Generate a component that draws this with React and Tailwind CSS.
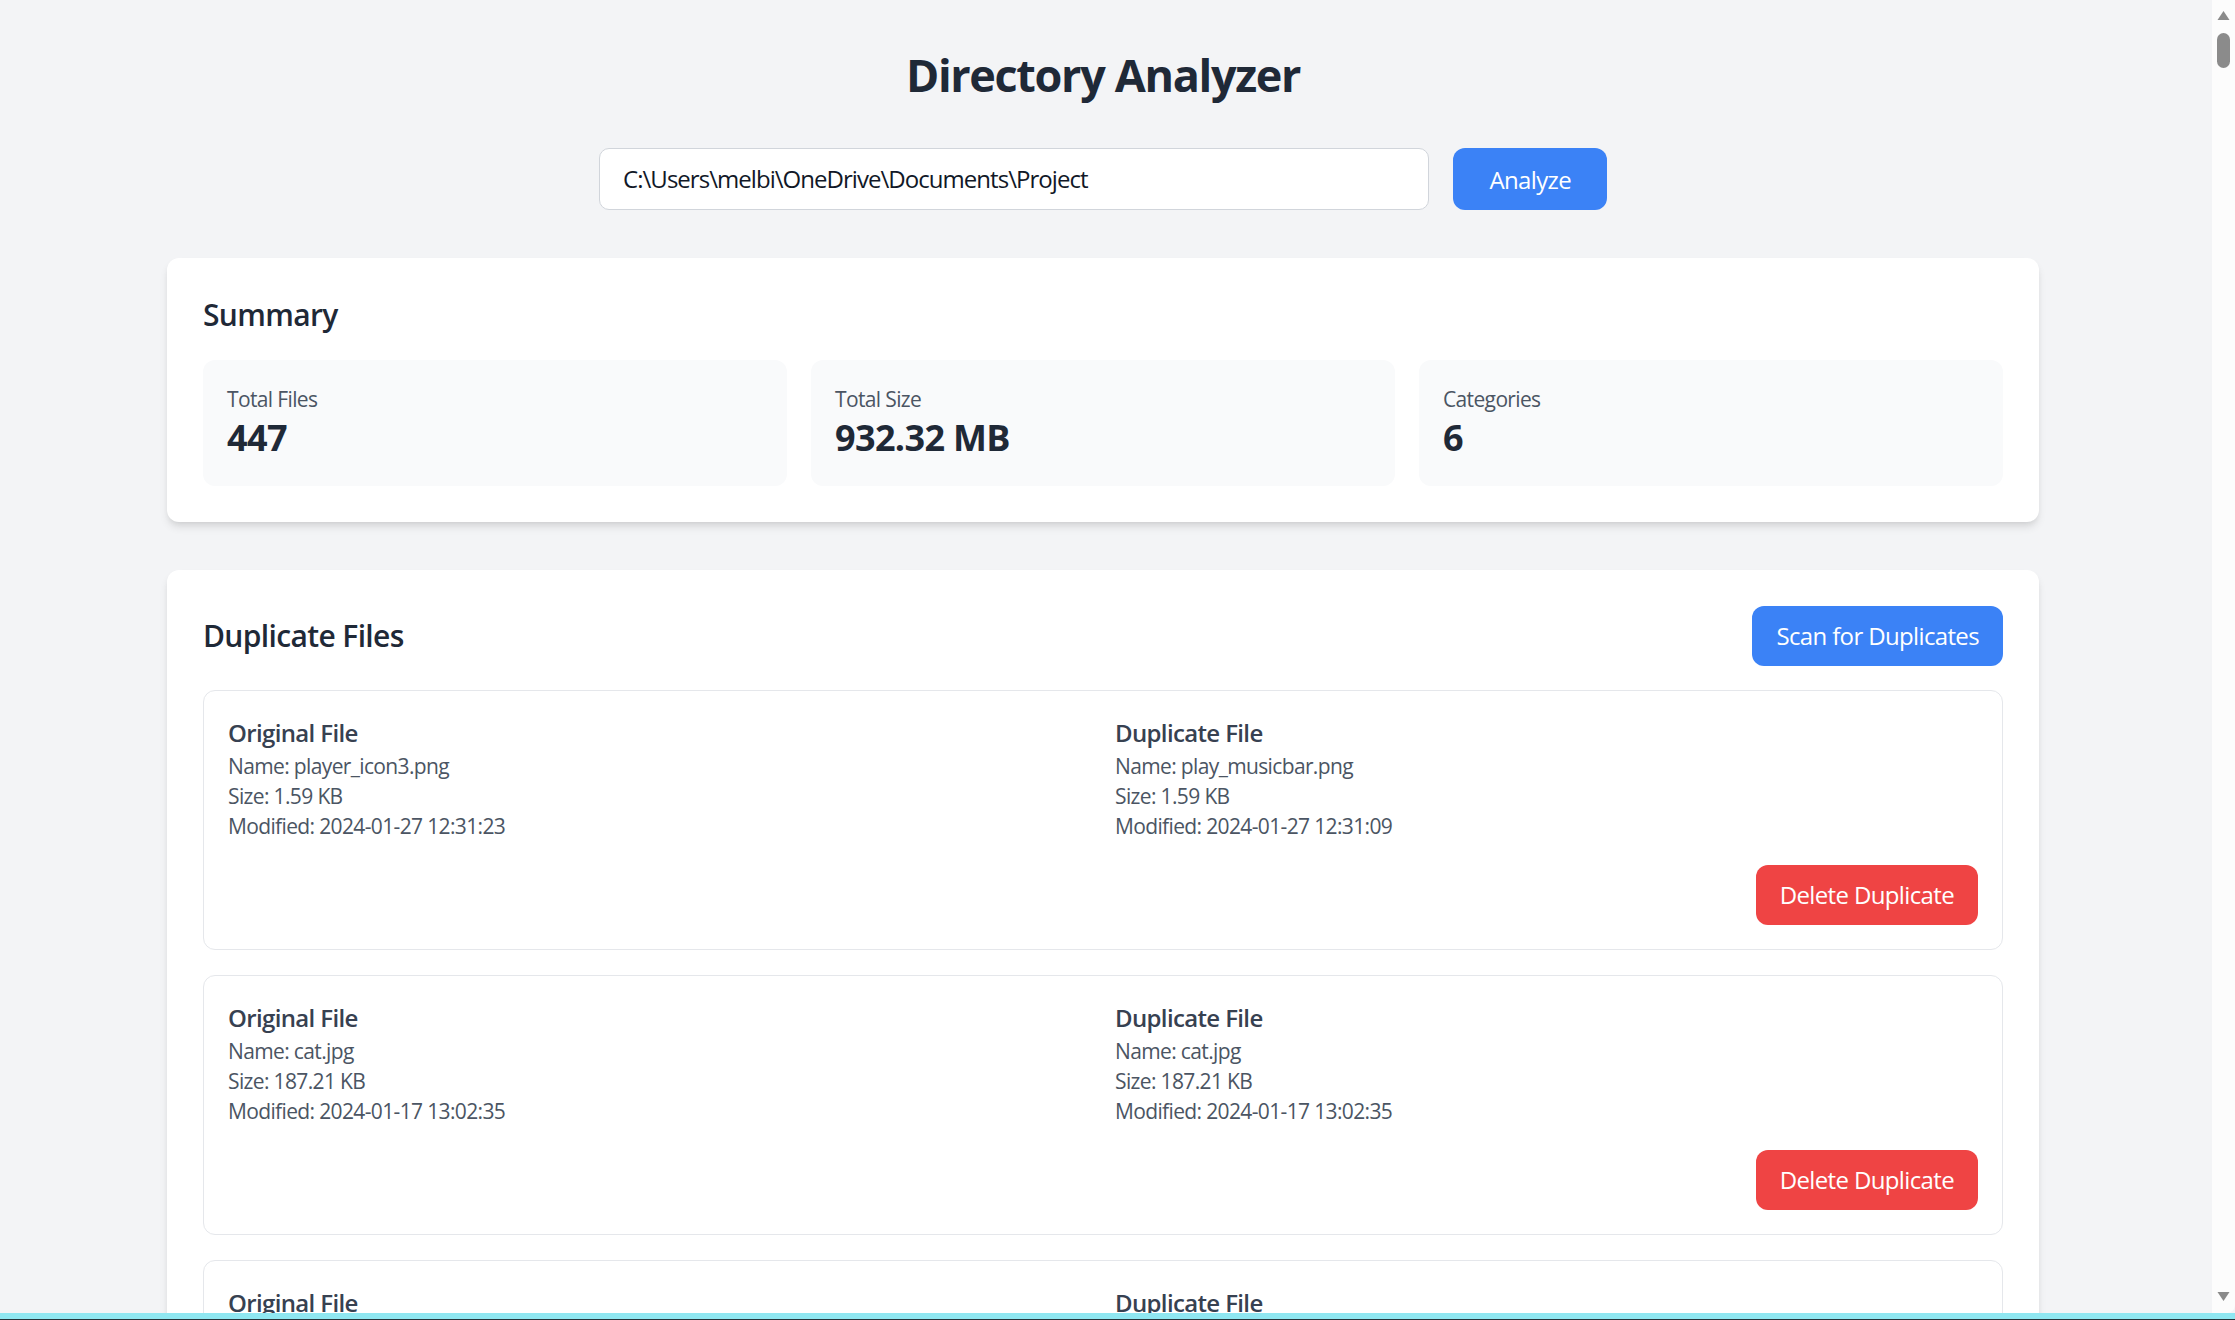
const duplicates = [
  {
    original: { name: "player_icon3.png", size: "1.59 KB", modified: "2024-01-27 12:31:23" },
    duplicate: { name: "play_musicbar.png", size: "1.59 KB", modified: "2024-01-27 12:31:09" },
  },
  {
    original: { name: "cat.jpg", size: "187.21 KB", modified: "2024-01-17 13:02:35" },
    duplicate: { name: "cat.jpg", size: "187.21 KB", modified: "2024-01-17 13:02:35" },
  },
  {
    original: { name: "logo.png", size: "12.48 KB", modified: "2024-01-12 09:14:52" },
    duplicate: { name: "logo_copy.png", size: "12.48 KB", modified: "2024-01-12 09:15:07" },
  },
];

const stats = [
  { label: "Total Files", value: "447" },
  { label: "Total Size", value: "932.32 MB" },
  { label: "Categories", value: "6" },
];

const cardShadow =
  "shadow-[0_6px_9px_-1.5px_rgba(0,0,0,0.1),0_3px_6px_-3px_rgba(0,0,0,0.1)]";

function FileInfo({ title, file }) {
  return (
    <div>
      <h3 className="text-[24px] leading-[36px] font-semibold text-[#374151]">{title}</h3>
      <p className="text-[21px] leading-[30px] text-[#4b5563]">Name: {file.name}</p>
      <p className="text-[21px] leading-[30px] text-[#4b5563]">Size: {file.size}</p>
      <p className="text-[21px] leading-[30px] text-[#4b5563]">Modified: {file.modified}</p>
    </div>
  );
}

function Scrollbar() {
  return (
    <div className="fixed top-0 right-0 w-[23px] h-[1313px] bg-[#fcfcfc] rounded-br-[8px] flex flex-col items-center justify-between py-[10px]">
      <div className="flex flex-col items-center gap-[12px]">
        <svg width="13" height="11" viewBox="0 0 13 11">
          <path d="M6.5 1 L12.5 10 L0.5 10 Z" fill="#8a8a8a" />
        </svg>
        <div className="w-[13px] h-[35px] rounded-full bg-[#8b8b8b]" />
      </div>
      <svg width="13" height="11" viewBox="0 0 13 11" className="mb-[1px]">
        <path d="M0.5 1 L12.5 1 L6.5 10 Z" fill="#8a8a8a" />
      </svg>
    </div>
  );
}

export default function App() {
  return (
    <div
      className="min-h-screen bg-[#f3f4f6] pr-[29px] tracking-[-0.04em]"
      style={{ fontFamily: '"Open Sans", "Noto Sans", sans-serif' }}
    >
      <div className="max-w-[1920px] mx-auto px-[24px] pt-[48px] pb-[48px]">
        <h1 className="text-[45px] leading-[54px] font-bold text-center tracking-[-0.03em] text-[#1f2937] mb-[46px]">
          Directory Analyzer
        </h1>

        <div className="max-w-[1008px] mx-auto flex gap-[24px] mb-[48px]">
          <input
            type="text"
            defaultValue="C:\Users\melbi\OneDrive\Documents\Project"
            className="flex-1 px-[23px] py-[12px] text-[24px] leading-[36px] tracking-[-0.04em] text-[#111827] bg-white border border-[#d1d5db] rounded-[10px] outline-none"
          />
          <button className="px-[36px] py-[12px] text-[24px] leading-[37px] bg-[#3b82f6] text-white rounded-[12px]">
            Analyze
          </button>
        </div>

        {/* Summary */}
        <div className={`bg-white rounded-[12px] ${cardShadow} p-[36px] mb-[48px]`}>
          <h2 className="text-[30px] leading-[42px] font-semibold text-[#1f2937] mb-[24px]">Summary</h2>
          <div className="grid grid-cols-3 gap-[24px]">
            {stats.map((s) => (
              <div key={s.label} className="bg-[#f9fafb] rounded-[12px] p-[24px]">
                <p className="text-[21px] leading-[30px] text-[#4b5563]">{s.label}</p>
                <p className="text-[36px] leading-[48px] font-bold text-[#1f2937]">{s.value}</p>
              </div>
            ))}
          </div>
        </div>

        {/* Duplicates */}
        <div className={`bg-white rounded-[12px] ${cardShadow} p-[36px]`}>
          <div className="flex justify-between items-center mb-[24px]">
            <h2 className="text-[30px] leading-[42px] font-semibold text-[#1f2937]">Duplicate Files</h2>
            <button className="px-[24px] py-[12px] text-[24px] leading-[36px] bg-[#3b82f6] text-white rounded-[12px]">
              Scan for Duplicates
            </button>
          </div>
          <div className="flex flex-col gap-[25px]">
            {duplicates.map((d, i) => (
              <div key={i} className="border border-[#e5e7eb] rounded-[12px] p-[24px]">
                <div className="grid grid-cols-2 gap-[24px]">
                  <FileInfo title="Original File" file={d.original} />
                  <FileInfo title="Duplicate File" file={d.duplicate} />
                </div>
                <div className="mt-[24px] flex justify-end">
                  <button className="px-[24px] py-[12px] text-[24px] leading-[36px] bg-[#ef4444] text-white rounded-[12px]">
                    Delete Duplicate
                  </button>
                </div>
              </div>
            ))}
          </div>
        </div>
      </div>

      <Scrollbar />
      <div className="fixed bottom-0 left-0 right-0 h-[7px] bg-[#8fe7f1] border-b border-[#24343a]" />
    </div>
  );
}
